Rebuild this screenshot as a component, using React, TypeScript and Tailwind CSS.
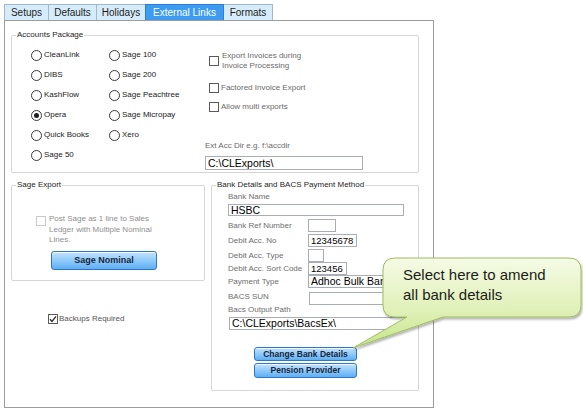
import React from "react";

const tabs = ["Setups", "Defaults", "Holidays", "External Links", "Formats"];
const tabWidths: Record<string, string> = {
  Setups: "w-[45px]",
  Defaults: "w-[49px]",
  Holidays: "w-[50px]",
  "External Links": "w-[79px]",
  Formats: "w-[50px]",
};

function Radio({ label, checked }: { label: string; checked?: boolean }) {
  return (
    <div className="h-[20px] flex items-center">
      <span className="w-[11px] h-[11px] rounded-full border border-[#3a3a3a] bg-white flex items-center justify-center">
        {checked && <span className="w-[5px] h-[5px] rounded-full bg-[#1e1e1e]" />}
      </span>
      <span className="ml-[2px] text-[#1a1a1a]">{label}</span>
    </div>
  );
}

function Check({ checked, disabled }: { checked?: boolean; disabled?: boolean }) {
  return (
    <span
      className={`shrink-0 w-[10px] h-[10px] border bg-white flex items-center justify-center ${
        disabled ? "border-[#c9c9c9]" : "border-[#5a5a5a]"
      }`}
    >
      {checked && (
        <svg width="8" height="8" viewBox="0 0 8 8">
          <path d="M1 4.2 L3 6.4 L7 1.4" fill="none" stroke="#2b2b2b" strokeWidth="1.3" />
        </svg>
      )}
    </span>
  );
}

function Field({
  w,
  h = "h-[13px]",
  text,
  size = "text-[10.5px]",
  className = "",
}: {
  w: string;
  h?: string;
  text?: string;
  size?: string;
  className?: string;
}) {
  return (
    <div
      className={`${w} ${h} ${size} ${className} border border-[#a9adb5] bg-white flex items-center pl-[2px] leading-none text-black overflow-hidden whitespace-nowrap`}
    >
      {text}
    </div>
  );
}

function BlueButton({ label, className }: { label: string; className: string }) {
  return (
    <div
      className={`${className} border border-[#2f78bd] rounded-[3px] bg-linear-to-b from-[#c4e3fd] via-[#8fcafa] to-[#5eaef4] shadow-[inset_0_1px_0_rgba(255,255,255,0.75)] flex items-center justify-center font-bold text-[#18263a]`}
    >
      {label}
    </div>
  );
}

function Group({ title, className, children }: { title: string; className: string; children: React.ReactNode }) {
  return (
    <fieldset className={`${className} border border-[#d6d6d6] rounded-[2px]`}>
      <legend className="ml-[4px] px-[1px] leading-[12px] text-[#1e1e1e]">{title}</legend>
      {children}
    </fieldset>
  );
}

export default function App() {
  return (
    <div className="relative w-[583px] h-[413px] bg-white overflow-hidden font-['Liberation_Sans',Arial,sans-serif] text-[8px]">
      {/* tab strip */}
      <div className="flex pl-[4px] pt-[4px] h-[20px]">
        {tabs.map((t, i) => {
          const active = t === "External Links";
          return (
            <div
              key={t}
              className={`${tabWidths[t]} ${i > 0 ? "-ml-px" : ""} h-[16px] border border-b-0 flex items-center justify-center text-[10px] ${
                active
                  ? "bg-[#3d9cf2] border-[#2b80d0] text-white relative"
                  : "bg-[#d7ecfa] border-[#a3b9ca] text-[#1e1e1e]"
              }`}
            >
              {t}
            </div>
          );
        })}
      </div>

      {/* tab page */}
      <div className="ml-[4px] w-[430px] h-[388px] border border-[#9c9c9c] bg-white">
        <Group title="Accounts Package" className="ml-[6px] mt-[8px] w-[408px] h-[144px]">
          <div className="flex pt-[4px] pl-[19px]">
            <div className="w-[78px] flex flex-col">
              <Radio label="CleanLink" />
              <Radio label="DIBS" />
              <Radio label="KashFlow" />
              <Radio label="Opera" checked />
              <Radio label="Quick Books" />
              <Radio label="Sage 50" />
            </div>
            <div className="w-[100px] flex flex-col">
              <Radio label="Sage 100" />
              <Radio label="Sage 200" />
              <Radio label="Sage Peachtree" />
              <Radio label="Sage Micropay" />
              <Radio label="Xero" />
            </div>
            <div className="flex flex-col pt-[6px] text-[#6a6a6a]">
              <div className="flex items-center h-[20px]">
                <Check />
                <span className="ml-[3px] leading-[10px]">
                  Export Invoices during
                  <br />
                  Invoice Processing
                </span>
              </div>
              <div className="flex items-center h-[10px] mt-[12px]">
                <Check />
                <span className="ml-[2px]">Factored Invoice Export</span>
              </div>
              <div className="flex items-center h-[10px] mt-[9px]">
                <Check />
                <span className="ml-[2px]">Allow multi exports</span>
              </div>
              <div className="-ml-[4px] mt-[29px] leading-[10px]">Ext Acc Dir e.g. f:\accdir</div>
              <Field w="w-[158px]" h="h-[14px]" text="C:\CLExports\" className="-ml-[4px] mt-[5px]" />
            </div>
          </div>
        </Group>

        <div className="flex gap-[6px] ml-[6px] mt-[6px]">
          <div className="w-[194px] flex flex-col">
            <Group title="Sage Export" className="w-[194px] h-[102px]">
              <div className="flex items-start mt-[25px] pl-[24px] h-[30px]">
                <Check disabled />
                <span className="ml-[3px] -mt-[2px] leading-[10.5px] text-[#8e8e8e]">
                  Post Sage as 1 line to Sales
                  <br />
                  Ledger with Multiple Nominal
                  <br />
                  Lines.
                </span>
              </div>
              <BlueButton label="Sage Nominal" className="ml-[39px] mt-[5px] w-[106px] h-[19px] text-[9px]" />
            </Group>
            <div className="flex items-center ml-[37px] mt-[32px] text-[#555]">
              <Check checked />
              <span className="ml-[1px]">Backups Required</span>
            </div>
          </div>

          <Group title="Bank Details and BACS Payment Method" className="w-[208px] h-[212px]">
            <div className="flex flex-col pl-[16px] text-[#6e6e6e]">
              <div className="mt-[1px] h-[10px] leading-[10px]">Bank Name</div>
              <Field w="w-[176px]" h="h-[12px]" text="HSBC" className="mt-[2px]" />
              <div className="flex items-center h-[13px] mt-[3px]">
                <span className="w-[80px]">Bank Ref Number</span>
                <Field w="w-[28px]" />
              </div>
              <div className="flex items-center h-[13px] mt-[2px]">
                <span className="w-[80px]">Debit Acc. No</span>
                <Field w="w-[49px]" size="text-[9.5px]" text="12345678" />
              </div>
              <div className="flex items-center h-[13px] mt-[2px]">
                <span className="w-[80px]">Debit Acc. Type</span>
                <Field w="w-[16px]" />
              </div>
              <div className="flex items-center h-[13px]">
                <span className="w-[80px]">Debit Acc. Sort Code</span>
                <Field w="w-[39px]" size="text-[9.5px]" text="123456" />
              </div>
              <div className="flex items-center h-[13px]">
                <span className="w-[80px]">Payment Type</span>
                <Field w="w-[96px]" text="Adhoc Bulk Bank" />
              </div>
              <div className="flex items-center h-[13px] mt-[4px]">
                <span className="w-[81px] -mt-[3px]">BACS SUN</span>
                <Field w="w-[95px]" />
              </div>
              <div className="h-[10px] leading-[10px]">Bacs Output Path</div>
              <Field w="w-[176px]" text="C:\CLExports\BacsEx\" className="mt-[2px] ml-[1px]" />
              <BlueButton label="Change Bank Details" className="ml-[26px] mt-[17px] w-[103px] h-[14px] text-[8.5px]" />
              <BlueButton label="Pension Provider" className="ml-[26px] mt-[2px] w-[103px] h-[15px] text-[8.5px]" />
            </div>
          </Group>
        </div>
      </div>

      {/* speech callout */}
      <svg className="absolute left-[340px] top-[250px]" width="243" height="105" viewBox="0 0 243 105">
        <defs>
          <linearGradient id="calloutFill" x1="0" y1="0" x2="0" y2="1">
            <stop offset="0" stopColor="#f5fbe6" />
            <stop offset="0.6" stopColor="#dff0b6" />
            <stop offset="1" stopColor="#c7e48c" />
          </linearGradient>
          <filter id="calloutShadow" x="-10%" y="-10%" width="120%" height="130%">
            <feDropShadow dx="1" dy="2" stdDeviation="1.2" floodColor="#000" floodOpacity="0.3" />
          </filter>
        </defs>
        <path
          d="M55 8 H229 Q241 8 241 20 V55 Q241 67 229 67 H103 L13 98 L67 67 H55 Q43 67 43 55 V20 Q43 8 55 8 Z"
          fill="url(#calloutFill)"
          stroke="#9dbf5c"
          strokeWidth="1"
          filter="url(#calloutShadow)"
        />
      </svg>
      <div className="absolute left-[403px] top-[265px] text-[15px] leading-[20px] text-[#1c1c1c]">
        Select here to amend
        <br />
        all bank details
      </div>
    </div>
  );
}
